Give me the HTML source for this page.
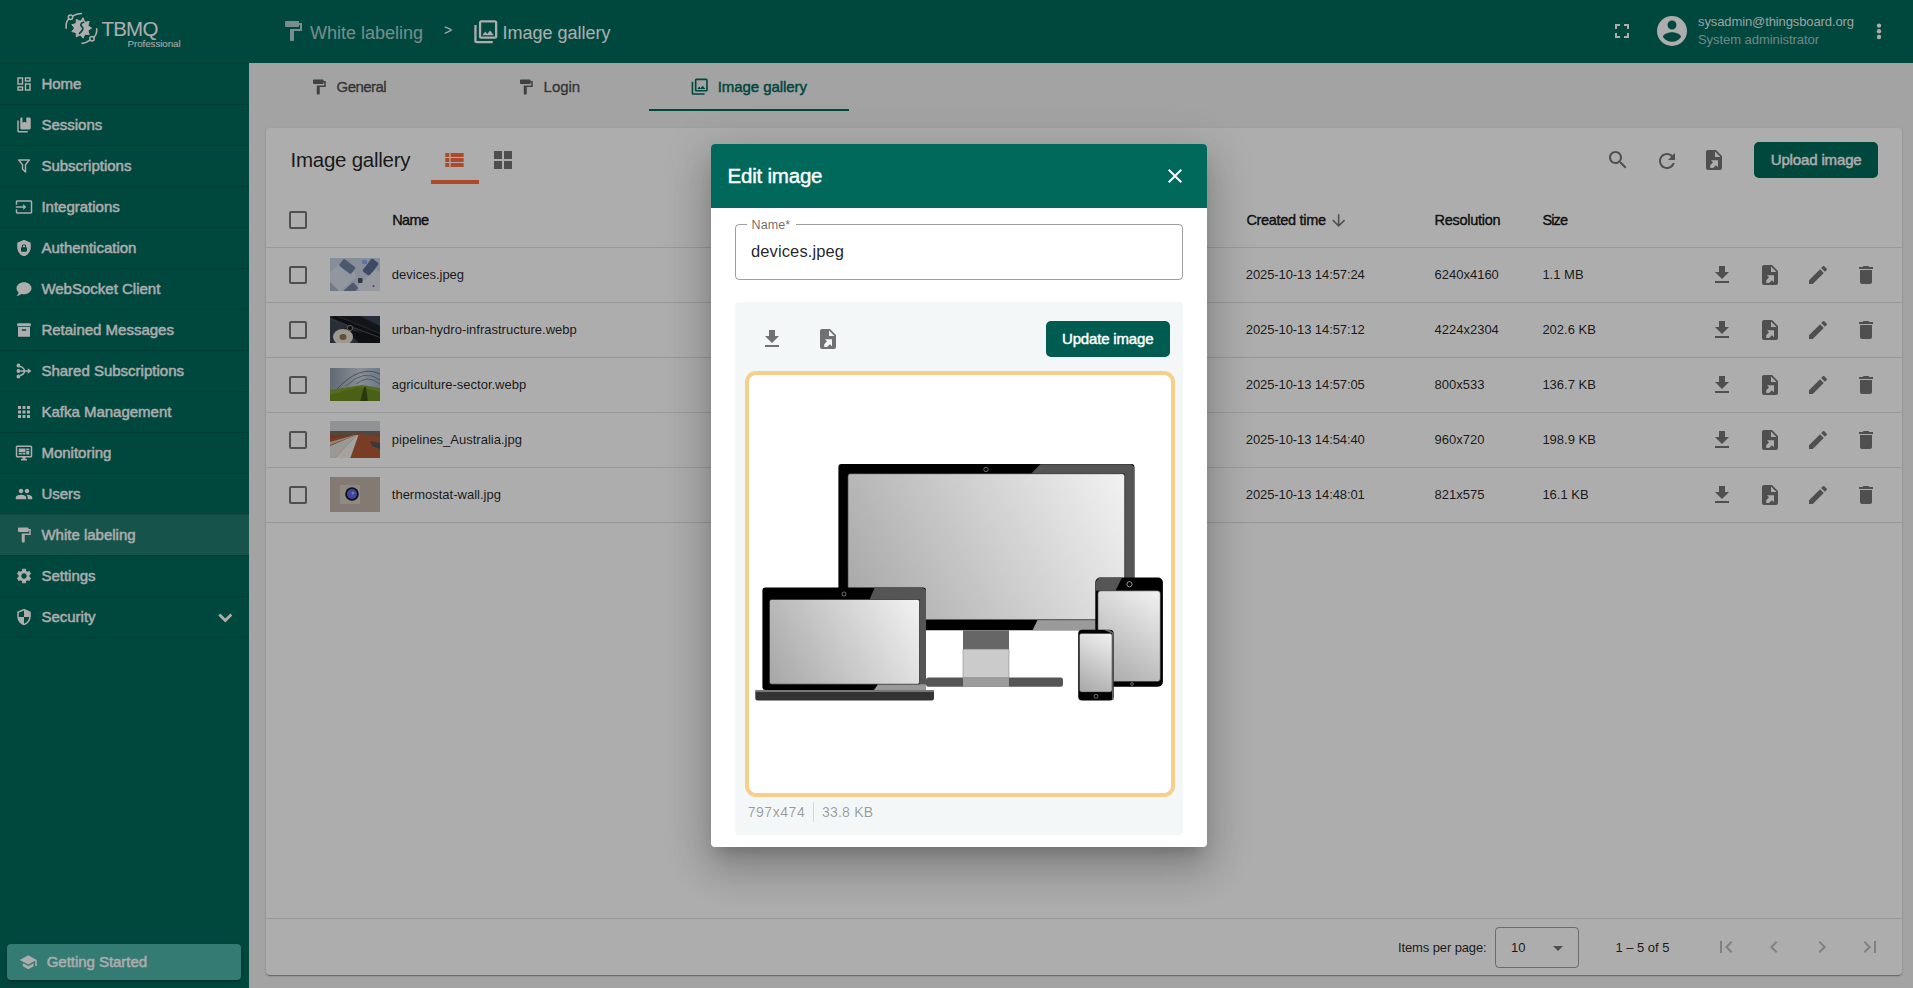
<!DOCTYPE html>
<html><head><meta charset="utf-8">
<style>
*{box-sizing:border-box;margin:0;padding:0}
html,body{width:1913px;height:988px;overflow:hidden;background:#f0f0f0;font-family:"Liberation Sans",sans-serif;}
.abs{position:absolute}
svg{display:block}
.t{position:absolute;white-space:nowrap;line-height:1}
.line{position:absolute;height:1px;background:rgba(0,0,0,0.12)}
.cb{position:absolute;width:18px;height:18px;border:2px solid rgba(0,0,0,0.54);border-radius:2px}
</style></head><body>

<div class="abs" style="left:0;top:0;width:249px;height:988px;background:#00695c"></div>
<div class="abs" style="left:249px;top:0;width:1664px;height:63px;background:#00695c"></div>
<svg class="abs" style="left:65px;top:12px;width:33px;height:33px" viewBox="0 0 33 33" fill="none" stroke="#fff" stroke-linecap="round">
<path d="M1.2 16.1 C0.8 12 2 8.5 4 6.7" stroke-width="1.6"/>
<circle cx="5.5" cy="5.2" r="2.2" stroke-width="1.5"/>
<path d="M7.6 4.2 C10 2.5 13 1.6 16.4 1.5" stroke-width="1.6"/>
<path d="M31.7 16.9 C32 21 30.5 24 28.6 25.6" stroke-width="1.6"/>
<circle cx="27" cy="26.7" r="2.2" stroke-width="1.5"/>
<path d="M25 28.1 C22.5 30 20 31 17.2 31.4" stroke-width="1.6"/>
<circle cx="16.4" cy="16.1" r="7.6" fill="#fff" stroke="none"/>
<polygon points="18.17,6.05 19.80,10.21 24.21,9.54 22.79,13.77 26.60,16.10 22.79,18.43 24.21,22.66 19.80,21.99 18.17,26.15 15.22,22.80 11.30,24.93 11.19,20.47 6.82,19.59 9.60,16.10 6.82,12.61 11.19,11.73 11.30,7.27 15.22,9.40" fill="#fff" stroke="#fff" stroke-width="1" stroke-linejoin="round"/>
<path d="M18.6 10.2 C15.5 11 15 13.5 17.2 15 C19 16.3 17 19 14.5 21.5" stroke="#00695c" stroke-width="1.7"/>
</svg>
<div class="t" style="left:101.40px;top:18.57px;font-size:20.5px;color:#fff;letter-spacing:-0.740px;">TBMQ</div>
<div class="t" style="left:127.60px;top:38.87px;font-size:9.8px;color:#fff;letter-spacing:-0.085px;">Professional</div>
<div class="line" style="left:0;top:63px;width:249px;background:rgba(0,0,0,0.14)"></div>
<svg class="abs" style="left:15px;top:75px;width:18px;height:18px;fill:#fff" viewBox="0 0 24 24"><path fill-rule="evenodd" d="M19 5v2h-4V5h4M9 5v6H5V5h4m10 8v6h-4v-6h4M9 17v2H5v-2h4M21 3h-8v6h8V3zM11 3H3v10h8V3zm10 8h-8v10h8V11zm-10 4H3v6h8v-6z"/></svg>
<div class="t" style="left:41.40px;top:76.05px;font-size:15px;color:#fff;-webkit-text-stroke:0.45px #fff;">Home</div>
<div class="line" style="left:0;top:104px;width:249px;background:rgba(0,0,0,0.14)"></div>
<svg class="abs" style="left:15px;top:116px;width:18px;height:18px;fill:#fff" viewBox="0 0 24 24"><path fill-rule="evenodd" d="M19 18H9C7.89 18 7 17.1 7 16V4C7 2.89 7.89 2 9 2H10V9L12.5 7.5L15 9V2H19C20.1 2 21 2.89 21 4V16C21 17.1 20.1 18 19 18M17 20V22H5C3.89 22 3 21.1 3 20V6H5V20H17Z"/></svg>
<div class="t" style="left:41.40px;top:117.05px;font-size:15px;color:#fff;-webkit-text-stroke:0.45px #fff;">Sessions</div>
<div class="line" style="left:0;top:145px;width:249px;background:rgba(0,0,0,0.14)"></div>
<svg class="abs" style="left:15px;top:157px;width:18px;height:18px;fill:#fff" viewBox="0 0 24 24"><path fill-rule="evenodd" d="M15,19.88C15.04,20.18 14.94,20.5 14.71,20.71C14.32,21.1 13.69,21.1 13.3,20.71L9.29,16.7C9.06,16.47 8.96,16.16 9,15.87V10.75L4.21,4.62C3.87,4.19 3.95,3.56 4.38,3.22C4.57,3.08 4.78,3 5,3V3H19V3C19.22,3 19.43,3.08 19.62,3.22C20.05,3.56 20.13,4.19 19.79,4.62L15,10.75V19.88M7.04,5L11,10.06V15.58L13,17.58V10.05L16.96,5H7.04Z"/></svg>
<div class="t" style="left:41.40px;top:158.05px;font-size:15px;color:#fff;-webkit-text-stroke:0.45px #fff;">Subscriptions</div>
<div class="line" style="left:0;top:186px;width:249px;background:rgba(0,0,0,0.14)"></div>
<svg class="abs" style="left:15px;top:198px;width:18px;height:18px;fill:#fff" viewBox="0 0 24 24"><path fill-rule="evenodd" d="M21 3.01H3c-1.1 0-2 .9-2 2V9h2V4.99h18v14.03H3V15H1v4.01c0 1.1.9 1.98 2 1.98h18c1.1 0 2-.88 2-1.98v-14c0-1.11-.9-2-2-2zM11 16l4-4-4-4v3H1v2h10v3z"/></svg>
<div class="t" style="left:41.40px;top:199.05px;font-size:15px;color:#fff;-webkit-text-stroke:0.45px #fff;">Integrations</div>
<div class="line" style="left:0;top:227px;width:249px;background:rgba(0,0,0,0.14)"></div>
<svg class="abs" style="left:15px;top:239px;width:18px;height:18px;fill:#fff" viewBox="0 0 24 24"><path fill-rule="evenodd" d="M12,1L3,5V11C3,16.55 6.84,21.74 12,23C17.16,21.74 21,16.55 21,11V5L12,1M12,7C13.4,7 14.8,8.1 14.8,9.5V11C15.4,11 16,11.6 16,12.3V15.8C16,16.4 15.4,17 14.7,17H9.2C8.6,17 8,16.4 8,15.7V12.2C8,11.6 8.6,11 9.2,11V9.5C9.2,8.1 10.6,7 12,7M12,8.2C11.2,8.2 10.5,8.7 10.5,9.5V11H13.5V9.5C13.5,8.7 12.8,8.2 12,8.2Z"/></svg>
<div class="t" style="left:41.40px;top:240.05px;font-size:15px;color:#fff;-webkit-text-stroke:0.45px #fff;">Authentication</div>
<div class="line" style="left:0;top:268px;width:249px;background:rgba(0,0,0,0.14)"></div>
<svg class="abs" style="left:15px;top:280px;width:18px;height:18px;fill:#fff" viewBox="0 0 24 24"><path fill-rule="evenodd" d="M12,3C17.5,3 22,6.58 22,11C22,15.42 17.5,19 12,19C10.76,19 9.57,18.82 8.47,18.5C5.55,21 2,21 2,21C4.33,18.67 4.7,17.1 4.75,16.5C3.05,15.07 2,13.13 2,11C2,6.58 6.5,3 12,3Z"/></svg>
<div class="t" style="left:41.40px;top:281.05px;font-size:15px;color:#fff;-webkit-text-stroke:0.45px #fff;">WebSocket Client</div>
<div class="line" style="left:0;top:309px;width:249px;background:rgba(0,0,0,0.14)"></div>
<svg class="abs" style="left:15px;top:321px;width:18px;height:18px;fill:#fff" viewBox="0 0 24 24"><path fill-rule="evenodd" d="M3,3H21V7H3V3M4,8H20V21H4V8M9.5,11A0.5,0.5 0 0,0 9,11.5V13H15V11.5A0.5,0.5 0 0,0 14.5,11H9.5Z"/></svg>
<div class="t" style="left:41.40px;top:322.05px;font-size:15px;color:#fff;-webkit-text-stroke:0.45px #fff;">Retained Messages</div>
<div class="line" style="left:0;top:350px;width:249px;background:rgba(0,0,0,0.14)"></div>
<svg class="abs" style="left:15px;top:362px;width:18px;height:18px;fill:#fff" viewBox="0 0 24 24"><path fill-rule="evenodd" d="M4.6 2.1a2.6 2.6 0 1 1 0 5.2a2.6 2.6 0 1 1 0-5.2zM4.6 9.4a2.6 2.6 0 1 1 0 5.2a2.6 2.6 0 1 1 0-5.2zM4.6 16.8a2.6 2.6 0 1 1 0 5.2a2.6 2.6 0 1 1 0-5.2zM6.8 11H17V8.2L21.9 12 17 15.8V13H6.8zM6.6 4.9C10.4 5.5 13 8.3 13.7 11h-2.1C10.9 9.1 8.9 7.4 6.3 7.1zM6.6 19.1C10.4 18.5 13 15.7 13.7 13h-2.1C10.9 14.9 8.9 16.6 6.3 16.9z"/></svg>
<div class="t" style="left:41.40px;top:363.05px;font-size:15px;color:#fff;-webkit-text-stroke:0.45px #fff;">Shared Subscriptions</div>
<div class="line" style="left:0;top:391px;width:249px;background:rgba(0,0,0,0.14)"></div>
<svg class="abs" style="left:15px;top:403px;width:18px;height:18px;fill:#fff" viewBox="0 0 24 24"><path fill-rule="evenodd" d="M4 8h4V4H4v4zm6 12h4v-4h-4v4zm-6 0h4v-4H4v4zm0-6h4v-4H4v4zm6 0h4v-4h-4v4zm6-10v4h4V4h-4zm-6 4h4V4h-4v4zm6 6h4v-4h-4v4zm0 6h4v-4h-4v4z"/></svg>
<div class="t" style="left:41.40px;top:404.05px;font-size:15px;color:#fff;-webkit-text-stroke:0.45px #fff;">Kafka Management</div>
<div class="line" style="left:0;top:432px;width:249px;background:rgba(0,0,0,0.14)"></div>
<svg class="abs" style="left:15px;top:444px;width:18px;height:18px;fill:#fff" viewBox="0 0 24 24"><path fill-rule="evenodd" d="M21,16V4H3V16H21M21,2A2,2 0 0,1 23,4V16A2,2 0 0,1 21,18H14V20H16V22H8V20H10V18H3C1.89,18 1,17.1 1,16V4C1,2.89 1.89,2 3,2H21M5,6H14V11H5V6M15,6H19V8H15V6M19,9V14H15V9H19M5,12H9V14H5V12M10,12H14V14H10V12Z"/></svg>
<div class="t" style="left:41.40px;top:445.05px;font-size:15px;color:#fff;-webkit-text-stroke:0.45px #fff;">Monitoring</div>
<div class="line" style="left:0;top:473px;width:249px;background:rgba(0,0,0,0.14)"></div>
<svg class="abs" style="left:15px;top:485px;width:18px;height:18px;fill:#fff" viewBox="0 0 24 24"><path fill-rule="evenodd" d="M16 11c1.66 0 2.99-1.34 2.99-3S17.66 5 16 5c-1.66 0-3 1.34-3 3s1.34 3 3 3zm-8 0c1.66 0 2.99-1.34 2.99-3S9.66 5 8 5C6.34 5 5 6.34 5 8s1.34 3 3 3zm0 2c-2.33 0-7 1.17-7 3.5V19h14v-2.5c0-2.33-4.67-3.5-7-3.5zm8 0c-.29 0-.62.02-.97.05 1.16.84 1.97 1.97 1.97 3.45V19h6v-2.5c0-2.33-4.67-3.5-7-3.5z"/></svg>
<div class="t" style="left:41.40px;top:486.05px;font-size:15px;color:#fff;-webkit-text-stroke:0.45px #fff;">Users</div>
<div class="abs" style="left:0;top:514px;width:249px;height:41px;background:rgba(255,255,255,0.12)"></div>
<div class="line" style="left:0;top:514px;width:249px;background:rgba(0,0,0,0.14)"></div>
<svg class="abs" style="left:15px;top:526px;width:18px;height:18px;fill:#fff" viewBox="0 0 24 24"><path fill-rule="evenodd" d="M18 4V3c0-.55-.45-1-1-1H5c-.55 0-1 .45-1 1v4c0 .55.45 1 1 1h12c.55 0 1-.45 1-1V6h1v4H9v11c0 .55.45 1 1 1h2c.55 0 1-.45 1-1v-9h8V4h-3z"/></svg>
<div class="t" style="left:41.40px;top:527.05px;font-size:15px;color:#fff;-webkit-text-stroke:0.45px #fff;">White labeling</div>
<div class="line" style="left:0;top:555px;width:249px;background:rgba(0,0,0,0.14)"></div>
<svg class="abs" style="left:15px;top:567px;width:18px;height:18px;fill:#fff" viewBox="0 0 24 24"><path fill-rule="evenodd" d="M19.14,12.94c0.04-0.3,0.06-0.61,0.06-0.94c0-0.32-0.02-0.64-0.07-0.94l2.03-1.58c0.18-0.14,0.23-0.41,0.12-0.61l-1.92-3.32c-0.12-0.22-0.37-0.29-0.59-0.22l-2.39,0.96c-0.5-0.38-1.03-0.7-1.62-0.94L14.4,2.81c-0.04-0.24-0.24-0.41-0.48-0.41h-3.84c-0.24,0-0.43,0.17-0.47,0.41L9.25,5.35C8.66,5.59,8.12,5.92,7.63,6.29L5.24,5.33c-0.22-0.08-0.47,0-0.59,0.22L2.74,8.87C2.62,9.08,2.66,9.34,2.86,9.48l2.03,1.58C4.84,11.36,4.8,11.69,4.8,12s0.02,0.64,0.07,0.94l-2.03,1.58c-0.18,0.14-0.23,0.41-0.12,0.61l1.92,3.32c0.12,0.22,0.37,0.29,0.59,0.22l2.39-0.96c0.5,0.38,1.03,0.7,1.62,0.94l0.36,2.54c0.05,0.24,0.24,0.41,0.48,0.41h3.84c0.24,0,0.44-0.17,0.47-0.41l0.36-2.54c0.59-0.24,1.13-0.56,1.62-0.94l2.39,0.96c0.22,0.08,0.47,0,0.59-0.22l1.92-3.32c0.12-0.22,0.07-0.47-0.12-0.61L19.14,12.94z M12,15.6c-1.98,0-3.6-1.62-3.6-3.6s1.62-3.6,3.6-3.6s3.6,1.62,3.6,3.6S13.98,15.6,12,15.6z"/></svg>
<div class="t" style="left:41.40px;top:568.05px;font-size:15px;color:#fff;-webkit-text-stroke:0.45px #fff;">Settings</div>
<div class="line" style="left:0;top:596px;width:249px;background:rgba(0,0,0,0.14)"></div>
<svg class="abs" style="left:15px;top:608px;width:18px;height:18px;fill:#fff" viewBox="0 0 24 24"><path fill-rule="evenodd" d="M12,12H19C18.47,16.11 15.72,19.78 12,20.92V12H5V6.3L12,3.19M12,1L3,5V11C3,16.55 6.84,21.73 12,23C17.16,21.73 21,16.55 21,11V5L12,1Z"/></svg>
<div class="t" style="left:41.40px;top:609.05px;font-size:15px;color:#fff;-webkit-text-stroke:0.45px #fff;">Security</div>
<div class="line" style="left:0;top:637px;width:249px;background:rgba(0,0,0,0.14)"></div>
<svg class="abs" style="left:210px;top:602px;width:30px;height:30px" viewBox="210 602 30 30"><polyline points="219.3,614.6 225.3,620.6 231.3,614.6" fill="none" stroke="#fff" stroke-width="2.8"/></svg>
<div class="abs" style="left:7px;top:944px;width:234px;height:36px;background:#4db6ac;border-radius:4px;box-shadow:0 3px 1px -2px rgba(0,0,0,.2),0 2px 2px 0 rgba(0,0,0,.14),0 1px 5px 0 rgba(0,0,0,.12)"></div>
<svg class="abs" style="left:19px;top:952.7px;width:18.5px;height:18.5px;fill:#fff" viewBox="0 0 24 24"><path fill-rule="evenodd" d="M5 13.18v4L12 21l7-3.82v-4L12 17l-7-3.82zM12 3L1 9l11 6 9-4.91V17h2V9L12 3z"/></svg>
<div class="t" style="left:46.70px;top:954.25px;font-size:15px;color:#fff;letter-spacing:-0.035px;-webkit-text-stroke:0.45px #fff;">Getting Started</div>
<svg class="abs" style="left:281px;top:19px;width:24px;height:24px;fill:rgba(255,255,255,0.7)" viewBox="0 0 24 24"><path fill-rule="evenodd" d="M18 4V3c0-.55-.45-1-1-1H5c-.55 0-1 .45-1 1v4c0 .55.45 1 1 1h12c.55 0 1-.45 1-1V6h1v4H9v11c0 .55.45 1 1 1h2c.55 0 1-.45 1-1v-9h8V4h-3z"/></svg>
<div class="t" style="left:310.00px;top:23.90px;font-size:18px;color:rgba(255,255,255,0.7);letter-spacing:-0.005px;">White labeling</div>
<div class="t" style="left:444.00px;top:23.10px;font-size:14px;color:#fff;">&gt;</div>
<svg class="abs" style="left:471.5px;top:17.5px;width:27.6px;height:27.6px;fill:#fff" viewBox="0 0 24 24"><path fill-rule="evenodd" d="M20 4v12H8V4h12m0-2H8c-1.1 0-2 .9-2 2v12c0 1.1.9 2 2 2h12c1.1 0 2-.9 2-2V4c0-1.1-.9-2-2-2zm-8.5 9.67l1.69 2.26 2.48-3.1L19 15H9zM2 6v14c0 1.1.9 2 2 2h14v-2H4V6H2z"/></svg>
<div class="t" style="left:502.40px;top:23.90px;font-size:18px;color:#fff;letter-spacing:-0.005px;">Image gallery</div>
<svg class="abs" style="left:1610px;top:19px;width:24px;height:24px;fill:#fff" viewBox="0 0 24 24"><path fill-rule="evenodd" d="M7 14H5v5h5v-2H7v-3zm-2-4h2V7h3V5H5v5zm12 7h-3v2h5v-5h-2v3zM14 5v2h3v3h2V5h-5z"/></svg>
<svg class="abs" style="left:1654px;top:13px;width:36px;height:36px;fill:#fff" viewBox="0 0 24 24"><path fill-rule="evenodd" d="M12,19.2C9.5,19.2 7.29,17.92 6,16C6.03,14 10,12.9 12,12.9C14,12.9 17.97,14 18,16C16.71,17.92 14.5,19.2 12,19.2M12,5A3,3 0 0,1 15,8A3,3 0 0,1 12,11A3,3 0 0,1 9,8A3,3 0 0,1 12,5M12,2A10,10 0 0,0 2,12A10,10 0 0,0 12,22A10,10 0 0,0 22,12A10,10 0 0,0 12,2Z"/></svg>
<div class="t" style="left:1698.00px;top:14.95px;font-size:13px;color:rgba(255,255,255,0.9);letter-spacing:-0.106px;">sysadmin@thingsboard.org</div>
<div class="t" style="left:1698.00px;top:33.35px;font-size:13px;color:rgba(255,255,255,0.65);letter-spacing:-0.058px;">System administrator</div>
<svg class="abs" style="left:1870px;top:18px;width:18px;height:26px" viewBox="0 0 18 26" fill="#fff"><circle cx="9" cy="7.6" r="2.2"/><circle cx="9" cy="13.3" r="2.2"/><circle cx="9" cy="19" r="2.2"/></svg>
<svg class="abs" style="left:310.2px;top:77.5px;width:18px;height:18px;fill:rgba(0,0,0,0.6)" viewBox="0 0 24 24"><path fill-rule="evenodd" d="M18 4V3c0-.55-.45-1-1-1H5c-.55 0-1 .45-1 1v4c0 .55.45 1 1 1h12c.55 0 1-.45 1-1V6h1v4H9v11c0 .55.45 1 1 1h2c.55 0 1-.45 1-1v-9h8V4h-3z"/></svg>
<div class="t" style="left:336.60px;top:79.15px;font-size:15px;color:rgba(0,0,0,0.6);letter-spacing:-0.544px;-webkit-text-stroke:0.45px rgba(0,0,0,0.6);">General</div>
<svg class="abs" style="left:517.1px;top:77.5px;width:18px;height:18px;fill:rgba(0,0,0,0.6)" viewBox="0 0 24 24"><path fill-rule="evenodd" d="M18 4V3c0-.55-.45-1-1-1H5c-.55 0-1 .45-1 1v4c0 .55.45 1 1 1h12c.55 0 1-.45 1-1V6h1v4H9v11c0 .55.45 1 1 1h2c.55 0 1-.45 1-1v-9h8V4h-3z"/></svg>
<div class="t" style="left:543.60px;top:79.15px;font-size:15px;color:rgba(0,0,0,0.6);letter-spacing:-0.026px;-webkit-text-stroke:0.45px rgba(0,0,0,0.6);">Login</div>
<svg class="abs" style="left:690.4px;top:77.4px;width:19.4px;height:19.4px;fill:#00695c" viewBox="0 0 24 24"><path fill-rule="evenodd" d="M20 4v12H8V4h12m0-2H8c-1.1 0-2 .9-2 2v12c0 1.1.9 2 2 2h12c1.1 0 2-.9 2-2V4c0-1.1-.9-2-2-2zm-8.5 9.67l1.69 2.26 2.48-3.1L19 15H9zM2 6v14c0 1.1.9 2 2 2h14v-2H4V6H2z"/></svg>
<div class="t" style="left:717.70px;top:79.05px;font-size:15px;color:#00695c;letter-spacing:-0.062px;-webkit-text-stroke:0.45px #00695c;">Image gallery</div>
<div class="abs" style="left:649px;top:108.5px;width:200px;height:2.5px;background:#00695c"></div>
<div class="abs" style="left:266px;top:128px;width:1636px;height:847px;background:#fff;border-radius:4px;box-shadow:0 2px 1px -1px rgba(0,0,0,.2),0 1px 1px 0 rgba(0,0,0,.14),0 1px 3px 0 rgba(0,0,0,.12)"></div>
<div class="t" style="left:290.50px;top:150.07px;font-size:20.5px;color:rgba(0,0,0,0.87);letter-spacing:-0.255px;">Image gallery</div>
<svg class="abs" style="left:442.3px;top:147.9px;width:24px;height:24px;fill:#ff6e40" viewBox="0 0 24 24"><path fill-rule="evenodd" d="M3.3 5h4v4h-4zM8.6 5h13v4h-13zM3.3 10h4v4h-4zM8.6 10h13v4h-13zM3.3 15h4v4h-4zM8.6 15h13v4h-13z"/></svg>
<div class="abs" style="left:431px;top:180px;width:48px;height:4px;background:#ff6e40"></div>
<svg class="abs" style="left:490.7px;top:147.7px;width:24px;height:24px;fill:rgba(0,0,0,0.54)" viewBox="0 0 24 24"><path fill-rule="evenodd" d="M3 3h8v8H3zm10 0h8v8h-8zM3 13h8v8H3zm10 0h8v8h-8z"/></svg>
<svg class="abs" style="left:1606px;top:148px;width:24px;height:24px;fill:rgba(0,0,0,0.54)" viewBox="0 0 24 24"><path fill-rule="evenodd" d="M15.5 14h-.79l-.28-.27C15.41 12.59 16 11.11 16 9.5 16 5.91 13.09 3 9.5 3S3 5.91 3 9.5 5.91 16 9.5 16c1.61 0 3.09-.59 4.23-1.57l.27.28v.79l5 4.99L20.49 19l-4.99-5zm-6 0C7.01 14 5 11.99 5 9.5S7.01 5 9.5 5 14 7.01 14 9.5 11.99 14 9.5 14z"/></svg>
<svg class="abs" style="left:1654.5px;top:148.5px;width:24px;height:24px;fill:rgba(0,0,0,0.54)" viewBox="0 0 24 24"><path fill-rule="evenodd" d="M17.65 6.35C16.2 4.9 14.21 4 12 4c-4.42 0-7.99 3.58-7.99 8s3.57 8 7.99 8c3.73 0 6.84-2.55 7.73-6h-2.08c-.82 2.33-3.04 4-5.650 4-3.31 0-6-2.69-6-6s2.69-6 6-6c1.66 0 3.14.69 4.22 1.78L13 11h7V4l-2.35 2.35z"/></svg>
<svg class="abs" style="left:1702px;top:148px;width:24px;height:24px;fill:rgba(0,0,0,0.54)" viewBox="0 0 24 24"><path fill-rule="evenodd" d="M13,9V3.5L18.5,9M6,2C4.89,2 4,2.89 4,4V20A2,2 0 0,0 6,22H18A2,2 0 0,0 20,20V8L14,2H6Z M8.93,12.22H16V19.29L13.88,17.17L11.05,20H8.22V17.17L11.05,14.35Z"/></svg>
<div class="abs" style="left:1754px;top:142px;width:124px;height:36px;background:#00695c;border-radius:5px"></div>
<div class="t" style="left:1770.70px;top:152.05px;font-size:15px;color:#fff;letter-spacing:-0.142px;-webkit-text-stroke:0.45px #fff;">Upload image</div>
<div class="cb" style="left:289px;top:211px"></div>
<div class="t" style="left:392.20px;top:212.98px;font-size:14.5px;color:rgba(0,0,0,0.87);letter-spacing:-0.560px;-webkit-text-stroke:0.45px rgba(0,0,0,0.87);">Name</div>
<div class="t" style="left:1246.40px;top:212.98px;font-size:14.5px;color:rgba(0,0,0,0.87);letter-spacing:-0.301px;-webkit-text-stroke:0.45px rgba(0,0,0,0.87);">Created time</div>
<svg class="abs" style="left:1329.3px;top:210.8px;width:19.3px;height:19.3px;fill:rgba(0,0,0,0.54)" viewBox="0 0 24 24"><path fill-rule="evenodd" d="M20 12l-1.41-1.41L13 16.17V4h-2v12.17l-5.58-5.59L4 12l8 8 8-8z"/></svg>
<div class="t" style="left:1434.50px;top:212.98px;font-size:14.5px;color:rgba(0,0,0,0.87);letter-spacing:-0.280px;-webkit-text-stroke:0.45px rgba(0,0,0,0.87);">Resolution</div>
<div class="t" style="left:1542.40px;top:212.98px;font-size:14.5px;color:rgba(0,0,0,0.87);letter-spacing:-0.836px;-webkit-text-stroke:0.45px rgba(0,0,0,0.87);">Size</div>
<div class="line" style="left:266px;top:247px;width:1636px"></div>
<div class="cb" style="left:289px;top:266px"></div>
<div class="abs" style="left:330px;top:258.0px;width:50px;height:33px;overflow:hidden"><svg width="50" height="34" viewBox="0 0 50 34"><rect width="50" height="34" fill="#c9d1e2"/>
<g transform="rotate(-42 10 20)"><rect x="-6" y="9" width="30" height="21" rx="2" fill="#d8dde8"/></g>
<polygon points="0,33 10,34 0,24" fill="#aab3c6"/>
<g transform="rotate(38 17 8)"><rect x="10" y="4" width="15" height="8.5" rx="1.5" fill="#6e82a6"/></g>
<g transform="rotate(-52 40 10)"><rect x="33" y="5.5" width="16" height="9" rx="1.5" fill="#5a6d93"/></g>
<g transform="rotate(-42 42 27)"><rect x="29" y="18" width="27" height="20" rx="2" fill="#dfe3ec"/></g>
<g transform="rotate(-42 20 31)"><rect x="14" y="28" width="13" height="8" rx="1.5" fill="#7384a3"/></g>
<rect x="28" y="20" width="4.5" height="5" rx="1" fill="#4a4f5a"/>
<rect x="32" y="2" width="5" height="4" rx="1" fill="#86aaf0"/>
<circle cx="43.5" cy="28" r="1" fill="#667"/></svg></div>
<div class="t" style="left:391.80px;top:268.05px;font-size:13px;color:rgba(0,0,0,0.87);">devices.jpeg</div>
<div class="t" style="left:1245.80px;top:268.05px;font-size:13px;color:rgba(0,0,0,0.87);letter-spacing:-0.095px;">2025-10-13 14:57:24</div>
<div class="t" style="left:1434.50px;top:268.05px;font-size:13px;color:rgba(0,0,0,0.87);">6240x4160</div>
<div class="t" style="left:1542.40px;top:268.05px;font-size:13px;color:rgba(0,0,0,0.87);">1.1 MB</div>
<svg class="abs" style="left:1710px;top:262.5px;width:24px;height:24px;fill:rgba(0,0,0,0.54)" viewBox="0 0 24 24"><path fill-rule="evenodd" d="M19 9h-4V3H9v6H5l7 7 7-7zM5 18v2h14v-2H5z"/></svg>
<svg class="abs" style="left:1758px;top:262.5px;width:24px;height:24px;fill:rgba(0,0,0,0.54)" viewBox="0 0 24 24"><path fill-rule="evenodd" d="M13,9V3.5L18.5,9M6,2C4.89,2 4,2.89 4,4V20A2,2 0 0,0 6,22H18A2,2 0 0,0 20,20V8L14,2H6Z M8.93,12.22H16V19.29L13.88,17.17L11.05,20H8.22V17.17L11.05,14.35Z"/></svg>
<svg class="abs" style="left:1806px;top:262.5px;width:24px;height:24px;fill:rgba(0,0,0,0.54)" viewBox="0 0 24 24"><path fill-rule="evenodd" d="M3 17.25V21h3.75L17.81 9.94l-3.75-3.75L3 17.25zM20.71 7.04c.39-.39.39-1.02 0-1.41l-2.34-2.34c-.39-.39-1.02-.39-1.41 0l-1.83 1.83 3.75 3.75 1.83-1.83z"/></svg>
<svg class="abs" style="left:1854px;top:262.5px;width:24px;height:24px;fill:rgba(0,0,0,0.54)" viewBox="0 0 24 24"><path fill-rule="evenodd" d="M6 19c0 1.1.9 2 2 2h8c1.1 0 2-.9 2-2V7H6v12zM19 4h-3.5l-1-1h-5l-1 1H5v2h14V4z"/></svg>
<div class="line" style="left:266px;top:302px;width:1636px"></div>
<div class="cb" style="left:289px;top:321px"></div>
<div class="abs" style="left:330px;top:316.0px;width:50px;height:27px;overflow:hidden"><svg width="50" height="28" viewBox="0 0 50 28"><rect width="50" height="28" fill="#3a4452"/>
<polygon points="0,1 6,0 50,18 50,26" fill="#151719"/>
<polygon points="8,0 30,0 50,10 50,17" fill="#1d2024"/>
<polygon points="14,12 50,22 50,28 30,28" fill="#17191c"/>
<polygon points="0,2 50,21 50,22 0,4" fill="#4a4e55"/>
<ellipse cx="13" cy="21" rx="10" ry="8" fill="#e8e2d6"/><ellipse cx="13" cy="21" rx="3.5" ry="3" fill="#8c7650"/>
<circle cx="20" cy="12" r="2.6" fill="#111" stroke="#bbb" stroke-width="0.7"/></svg></div>
<div class="t" style="left:391.80px;top:323.05px;font-size:13px;color:rgba(0,0,0,0.87);">urban-hydro-infrastructure.webp</div>
<div class="t" style="left:1245.80px;top:323.05px;font-size:13px;color:rgba(0,0,0,0.87);letter-spacing:-0.095px;">2025-10-13 14:57:12</div>
<div class="t" style="left:1434.50px;top:323.05px;font-size:13px;color:rgba(0,0,0,0.87);">4224x2304</div>
<div class="t" style="left:1542.40px;top:323.05px;font-size:13px;color:rgba(0,0,0,0.87);">202.6 KB</div>
<svg class="abs" style="left:1710px;top:317.5px;width:24px;height:24px;fill:rgba(0,0,0,0.54)" viewBox="0 0 24 24"><path fill-rule="evenodd" d="M19 9h-4V3H9v6H5l7 7 7-7zM5 18v2h14v-2H5z"/></svg>
<svg class="abs" style="left:1758px;top:317.5px;width:24px;height:24px;fill:rgba(0,0,0,0.54)" viewBox="0 0 24 24"><path fill-rule="evenodd" d="M13,9V3.5L18.5,9M6,2C4.89,2 4,2.89 4,4V20A2,2 0 0,0 6,22H18A2,2 0 0,0 20,20V8L14,2H6Z M8.93,12.22H16V19.29L13.88,17.17L11.05,20H8.22V17.17L11.05,14.35Z"/></svg>
<svg class="abs" style="left:1806px;top:317.5px;width:24px;height:24px;fill:rgba(0,0,0,0.54)" viewBox="0 0 24 24"><path fill-rule="evenodd" d="M3 17.25V21h3.75L17.81 9.94l-3.75-3.75L3 17.25zM20.71 7.04c.39-.39.39-1.02 0-1.41l-2.34-2.34c-.39-.39-1.02-.39-1.41 0l-1.83 1.83 3.75 3.75 1.83-1.83z"/></svg>
<svg class="abs" style="left:1854px;top:317.5px;width:24px;height:24px;fill:rgba(0,0,0,0.54)" viewBox="0 0 24 24"><path fill-rule="evenodd" d="M6 19c0 1.1.9 2 2 2h8c1.1 0 2-.9 2-2V7H6v12zM19 4h-3.5l-1-1h-5l-1 1H5v2h14V4z"/></svg>
<div class="line" style="left:266px;top:357px;width:1636px"></div>
<div class="cb" style="left:289px;top:376px"></div>
<div class="abs" style="left:330px;top:368.0px;width:50px;height:33px;overflow:hidden"><svg width="50" height="34" viewBox="0 0 50 34"><defs><linearGradient id="ag" x1="0" y1="0" x2="1" y2="0"><stop offset="0" stop-color="#8d9cab"/><stop offset=".6" stop-color="#c9d3dc"/><stop offset="1" stop-color="#9fb3c8"/></linearGradient></defs>
<rect width="50" height="34" fill="url(#ag)"/>
<path d="M6 22 Q30 -4 50 6" fill="none" stroke="#3b4550" stroke-width="0.6"/><path d="M16 18 Q34 0 50 12" fill="none" stroke="#3b4550" stroke-width="0.5"/><path d="M26 16 Q38 6 50 16" fill="none" stroke="#3b4550" stroke-width="0.5"/>
<polygon points="0,22 32,17 50,20 50,34 0,34" fill="#7ea02c"/>
<polygon points="0,27 28,19 50,24 50,34 0,34" fill="#6a8f1e"/>
<polygon points="30,34 34,19 36,19 38,34" fill="#3c5614"/></svg></div>
<div class="t" style="left:391.80px;top:378.05px;font-size:13px;color:rgba(0,0,0,0.87);">agriculture-sector.webp</div>
<div class="t" style="left:1245.80px;top:378.05px;font-size:13px;color:rgba(0,0,0,0.87);letter-spacing:-0.095px;">2025-10-13 14:57:05</div>
<div class="t" style="left:1434.50px;top:378.05px;font-size:13px;color:rgba(0,0,0,0.87);">800x533</div>
<div class="t" style="left:1542.40px;top:378.05px;font-size:13px;color:rgba(0,0,0,0.87);">136.7 KB</div>
<svg class="abs" style="left:1710px;top:372.5px;width:24px;height:24px;fill:rgba(0,0,0,0.54)" viewBox="0 0 24 24"><path fill-rule="evenodd" d="M19 9h-4V3H9v6H5l7 7 7-7zM5 18v2h14v-2H5z"/></svg>
<svg class="abs" style="left:1758px;top:372.5px;width:24px;height:24px;fill:rgba(0,0,0,0.54)" viewBox="0 0 24 24"><path fill-rule="evenodd" d="M13,9V3.5L18.5,9M6,2C4.89,2 4,2.89 4,4V20A2,2 0 0,0 6,22H18A2,2 0 0,0 20,20V8L14,2H6Z M8.93,12.22H16V19.29L13.88,17.17L11.05,20H8.22V17.17L11.05,14.35Z"/></svg>
<svg class="abs" style="left:1806px;top:372.5px;width:24px;height:24px;fill:rgba(0,0,0,0.54)" viewBox="0 0 24 24"><path fill-rule="evenodd" d="M3 17.25V21h3.75L17.81 9.94l-3.75-3.75L3 17.25zM20.71 7.04c.39-.39.39-1.02 0-1.41l-2.34-2.34c-.39-.39-1.02-.39-1.41 0l-1.83 1.83 3.75 3.75 1.83-1.83z"/></svg>
<svg class="abs" style="left:1854px;top:372.5px;width:24px;height:24px;fill:rgba(0,0,0,0.54)" viewBox="0 0 24 24"><path fill-rule="evenodd" d="M6 19c0 1.1.9 2 2 2h8c1.1 0 2-.9 2-2V7H6v12zM19 4h-3.5l-1-1h-5l-1 1H5v2h14V4z"/></svg>
<div class="line" style="left:266px;top:412px;width:1636px"></div>
<div class="cb" style="left:289px;top:431px"></div>
<div class="abs" style="left:330px;top:421.0px;width:50px;height:37px;overflow:hidden"><svg width="50" height="38" viewBox="0 0 50 38"><rect width="50" height="38" fill="#b0403a"/>
<rect width="50" height="10" fill="#d6d8dc"/>
<polygon points="0,10 50,10 50,14 0,14" fill="#7a6a5c"/>
<polygon points="0,14 50,14 50,38 0,38" fill="#a5502e"/>
<polygon points="0,18 27,13 50,15 50,38 0,38" fill="#b25a36"/>
<polygon points="0,25 26,14 27,14 4,38 0,38" fill="#e4e2de"/>
<polygon points="4,38 27,14 28.5,14 20,38" fill="#f2f0ec"/>
<polygon points="0,21 25,14 26,14 0,24" fill="#cfcac4"/>
<polygon points="40,20 50,22 50,28 42,25" fill="#555"/></svg></div>
<div class="t" style="left:391.80px;top:433.05px;font-size:13px;color:rgba(0,0,0,0.87);">pipelines_Australia.jpg</div>
<div class="t" style="left:1245.80px;top:433.05px;font-size:13px;color:rgba(0,0,0,0.87);letter-spacing:-0.095px;">2025-10-13 14:54:40</div>
<div class="t" style="left:1434.50px;top:433.05px;font-size:13px;color:rgba(0,0,0,0.87);">960x720</div>
<div class="t" style="left:1542.40px;top:433.05px;font-size:13px;color:rgba(0,0,0,0.87);">198.9 KB</div>
<svg class="abs" style="left:1710px;top:427.5px;width:24px;height:24px;fill:rgba(0,0,0,0.54)" viewBox="0 0 24 24"><path fill-rule="evenodd" d="M19 9h-4V3H9v6H5l7 7 7-7zM5 18v2h14v-2H5z"/></svg>
<svg class="abs" style="left:1758px;top:427.5px;width:24px;height:24px;fill:rgba(0,0,0,0.54)" viewBox="0 0 24 24"><path fill-rule="evenodd" d="M13,9V3.5L18.5,9M6,2C4.89,2 4,2.89 4,4V20A2,2 0 0,0 6,22H18A2,2 0 0,0 20,20V8L14,2H6Z M8.93,12.22H16V19.29L13.88,17.17L11.05,20H8.22V17.17L11.05,14.35Z"/></svg>
<svg class="abs" style="left:1806px;top:427.5px;width:24px;height:24px;fill:rgba(0,0,0,0.54)" viewBox="0 0 24 24"><path fill-rule="evenodd" d="M3 17.25V21h3.75L17.81 9.94l-3.75-3.75L3 17.25zM20.71 7.04c.39-.39.39-1.02 0-1.41l-2.34-2.34c-.39-.39-1.02-.39-1.41 0l-1.83 1.83 3.75 3.75 1.83-1.83z"/></svg>
<svg class="abs" style="left:1854px;top:427.5px;width:24px;height:24px;fill:rgba(0,0,0,0.54)" viewBox="0 0 24 24"><path fill-rule="evenodd" d="M6 19c0 1.1.9 2 2 2h8c1.1 0 2-.9 2-2V7H6v12zM19 4h-3.5l-1-1h-5l-1 1H5v2h14V4z"/></svg>
<div class="line" style="left:266px;top:467px;width:1636px"></div>
<div class="cb" style="left:289px;top:486px"></div>
<div class="abs" style="left:330px;top:477.0px;width:50px;height:35px;overflow:hidden"><svg width="50" height="35" viewBox="0 0 50 35"><rect width="50" height="35" fill="#c2b5aa"/><rect x="10" y="8" width="20" height="19" fill="#d5ccc4"/>
<circle cx="22" cy="17" r="6.8" fill="#1a1a1a"/><circle cx="22" cy="17" r="5" fill="#5a66e8"/><circle cx="23" cy="16" r="1.5" fill="#a9b0ff"/></svg></div>
<div class="t" style="left:391.80px;top:488.05px;font-size:13px;color:rgba(0,0,0,0.87);">thermostat-wall.jpg</div>
<div class="t" style="left:1245.80px;top:488.05px;font-size:13px;color:rgba(0,0,0,0.87);letter-spacing:-0.095px;">2025-10-13 14:48:01</div>
<div class="t" style="left:1434.50px;top:488.05px;font-size:13px;color:rgba(0,0,0,0.87);">821x575</div>
<div class="t" style="left:1542.40px;top:488.05px;font-size:13px;color:rgba(0,0,0,0.87);">16.1 KB</div>
<svg class="abs" style="left:1710px;top:482.5px;width:24px;height:24px;fill:rgba(0,0,0,0.54)" viewBox="0 0 24 24"><path fill-rule="evenodd" d="M19 9h-4V3H9v6H5l7 7 7-7zM5 18v2h14v-2H5z"/></svg>
<svg class="abs" style="left:1758px;top:482.5px;width:24px;height:24px;fill:rgba(0,0,0,0.54)" viewBox="0 0 24 24"><path fill-rule="evenodd" d="M13,9V3.5L18.5,9M6,2C4.89,2 4,2.89 4,4V20A2,2 0 0,0 6,22H18A2,2 0 0,0 20,20V8L14,2H6Z M8.93,12.22H16V19.29L13.88,17.17L11.05,20H8.22V17.17L11.05,14.35Z"/></svg>
<svg class="abs" style="left:1806px;top:482.5px;width:24px;height:24px;fill:rgba(0,0,0,0.54)" viewBox="0 0 24 24"><path fill-rule="evenodd" d="M3 17.25V21h3.75L17.81 9.94l-3.75-3.75L3 17.25zM20.71 7.04c.39-.39.39-1.02 0-1.41l-2.34-2.34c-.39-.39-1.02-.39-1.41 0l-1.83 1.83 3.75 3.75 1.83-1.83z"/></svg>
<svg class="abs" style="left:1854px;top:482.5px;width:24px;height:24px;fill:rgba(0,0,0,0.54)" viewBox="0 0 24 24"><path fill-rule="evenodd" d="M6 19c0 1.1.9 2 2 2h8c1.1 0 2-.9 2-2V7H6v12zM19 4h-3.5l-1-1h-5l-1 1H5v2h14V4z"/></svg>
<div class="line" style="left:266px;top:522px;width:1636px"></div>
<div class="line" style="left:266px;top:918px;width:1636px"></div>
<div class="t" style="left:1398.00px;top:941.35px;font-size:13px;color:rgba(0,0,0,0.87);letter-spacing:-0.116px;">Items per page:</div>
<div class="abs" style="left:1495px;top:927px;width:84px;height:41px;border:1px solid rgba(0,0,0,0.38);border-radius:4px"></div>
<div class="t" style="left:1511.00px;top:941.35px;font-size:13px;color:rgba(0,0,0,0.87);">10</div>
<svg class="abs" style="left:1546px;top:936px;width:24px;height:24px;fill:rgba(0,0,0,0.54)" viewBox="0 0 24 24"><path fill-rule="evenodd" d="M7 10l5 5 5-5z"/></svg>
<div class="t" style="left:1615.40px;top:941.35px;font-size:13px;color:rgba(0,0,0,0.87);letter-spacing:-0.023px;">1 – 5 of 5</div>
<svg class="abs" style="left:1714px;top:935px;width:24px;height:24px;fill:rgba(0,0,0,0.26)" viewBox="0 0 24 24"><path fill-rule="evenodd" d="M18.41 16.59L13.82 12l4.59-4.59L17 6l-6 6 6 6zM6 6h2v12H6z"/></svg>
<svg class="abs" style="left:1762px;top:935px;width:24px;height:24px;fill:rgba(0,0,0,0.26)" viewBox="0 0 24 24"><path fill-rule="evenodd" d="M15.41 16.59L10.83 12l4.58-4.59L14 6l-6 6 6 6 1.41-1.41z"/></svg>
<svg class="abs" style="left:1810px;top:935px;width:24px;height:24px;fill:rgba(0,0,0,0.26)" viewBox="0 0 24 24"><path fill-rule="evenodd" d="M8.59 16.59L13.17 12 8.59 7.41 10 6l6 6-6 6-1.41-1.41z"/></svg>
<svg class="abs" style="left:1858px;top:935px;width:24px;height:24px;fill:rgba(0,0,0,0.26)" viewBox="0 0 24 24"><path fill-rule="evenodd" d="M5.59 7.41L10.18 12l-4.59 4.59L7 18l6-6-6-6zM16 6h2v12h-2z"/></svg>
<div class="abs" style="left:0;top:0;width:1913px;height:988px;background:rgba(0,0,0,0.32)"></div>
<div class="abs" style="left:711px;top:144px;width:496px;height:703px;background:#fff;border-radius:4px;box-shadow:0 11px 15px -7px rgba(0,0,0,.2),0 24px 38px 3px rgba(0,0,0,.14),0 9px 46px 8px rgba(0,0,0,.12);overflow:hidden">
<div class="abs" style="left:0;top:0;width:496px;height:64px;background:#00695c"></div>
</div>
<div class="t" style="left:727.50px;top:166.27px;font-size:20.5px;color:#fff;letter-spacing:-0.206px;-webkit-text-stroke:0.4px #fff;">Edit image</div>
<svg class="abs" style="left:1163px;top:164px;width:24px;height:24px;fill:#fff" viewBox="0 0 24 24"><path fill-rule="evenodd" d="M19 6.41L17.59 5 12 10.59 6.41 5 5 6.41 10.59 12 5 17.59 6.41 19 12 13.41 17.59 19 19 17.59 13.41 12z"/></svg>
<div class="abs" style="left:735px;top:224px;width:448px;height:56px;border:1px solid rgba(0,0,0,0.38);border-radius:4px"></div>
<div class="abs" style="left:746.5px;top:220px;width:49px;height:8px;background:#fff"></div>
<div class="t" style="left:751.50px;top:219.18px;font-size:12.5px;color:rgba(0,0,0,0.6);letter-spacing:0.098px;">Name*</div>
<div class="t" style="left:751.00px;top:243.47px;font-size:16.5px;color:rgba(0,0,0,0.87);letter-spacing:0.116px;">devices.jpeg</div>
<div class="abs" style="left:735px;top:302px;width:448px;height:533px;background:#f4f7f8;border-radius:4px"></div>
<svg class="abs" style="left:760px;top:327px;width:24px;height:24px;fill:rgba(0,0,0,0.54)" viewBox="0 0 24 24"><path fill-rule="evenodd" d="M19 9h-4V3H9v6H5l7 7 7-7zM5 18v2h14v-2H5z"/></svg>
<svg class="abs" style="left:816px;top:327px;width:24px;height:24px;fill:rgba(0,0,0,0.54)" viewBox="0 0 24 24"><path fill-rule="evenodd" d="M13,9V3.5L18.5,9M6,2C4.89,2 4,2.89 4,4V20A2,2 0 0,0 6,22H18A2,2 0 0,0 20,20V8L14,2H6Z M8.93,12.22H16V19.29L13.88,17.17L11.05,20H8.22V17.17L11.05,14.35Z"/></svg>
<div class="abs" style="left:1046px;top:321px;width:124px;height:36px;background:#005c50;border-radius:5px"></div>
<div class="t" style="left:1062.00px;top:331.05px;font-size:15px;color:#fff;letter-spacing:-0.172px;-webkit-text-stroke:0.45px #fff;">Update image</div>
<div class="abs" style="left:744.5px;top:371px;width:430px;height:426px;border:4px solid #f7cf8b;border-radius:11px;background:#fff"></div>
<svg class="abs" style="left:745px;top:371px;width:429px;height:425px" viewBox="745 371 429 425">
<defs>
<linearGradient id="gm" gradientUnits="userSpaceOnUse" x1="848" y1="620" x2="1125" y2="474"><stop offset="0" stop-color="#a6a6a6"/><stop offset="1" stop-color="#f2f2f2"/></linearGradient>
<linearGradient id="gl" gradientUnits="userSpaceOnUse" x1="769" y1="684" x2="920" y2="600"><stop offset="0" stop-color="#a6a6a6"/><stop offset="1" stop-color="#f2f2f2"/></linearGradient>
<linearGradient id="gt" gradientUnits="userSpaceOnUse" x1="1098" y1="682" x2="1160" y2="591"><stop offset="0" stop-color="#a6a6a6"/><stop offset="1" stop-color="#f2f2f2"/></linearGradient>
<linearGradient id="gp" gradientUnits="userSpaceOnUse" x1="1079" y1="692" x2="1112" y2="633"><stop offset="0" stop-color="#a6a6a6"/><stop offset="1" stop-color="#f2f2f2"/></linearGradient>
</defs>
<!-- monitor -->
<rect x="838.4" y="464" width="296" height="166.3" rx="3" fill="#000"/>
<polygon points="1031,473.7 1040.5,464.3 1131,464.3 1134.4,467 1134.4,630 1124.7,630 1124.7,473.7" fill="#555"/>
<polygon points="1032.5,630.3 1037.5,620 1124.7,620 1124.7,630.3" fill="#9a9a9a"/>
<rect x="847.9" y="473.7" width="276.8" height="146" rx="2.5" fill="url(#gm)" stroke="#222" stroke-width="0.6"/>
<circle cx="986" cy="469.5" r="2.2" fill="none" stroke="#888" stroke-width="0.8"/>
<!-- stand -->
<rect x="926" y="677.6" width="137" height="9.2" rx="2.5" fill="#555"/>
<rect x="963" y="630.3" width="46" height="19" fill="#666"/>
<rect x="963" y="649.2" width="46" height="28.4" fill="#cbcbcb" stroke="#8a8a8a" stroke-width="0.6"/>
<rect x="963" y="677.6" width="46" height="9.2" fill="#9c9c9c"/>
<!-- laptop -->
<rect x="755.3" y="690" width="178.7" height="10.5" rx="2.5" fill="#333"/>
<rect x="755.3" y="690" width="178.7" height="2" fill="#777"/>
<rect x="762.4" y="587.4" width="163.6" height="102.6" rx="3" fill="#000"/>
<polygon points="869.5,599.5 874.7,587.8 923,587.8 926,590 926,690 919.5,690 919.5,599.5" fill="#555"/>
<polygon points="874,690 878,684.2 926,684.2 926,690" fill="#9a9a9a"/>
<rect x="769.5" y="599.5" width="150" height="84.7" rx="2" fill="url(#gl)" stroke="#222" stroke-width="0.6"/>
<circle cx="844" cy="594" r="2" fill="none" stroke="#888" stroke-width="0.8"/>
<!-- tablet -->
<rect x="1095.3" y="577.6" width="67.6" height="109.2" rx="5" fill="#000"/>
<polygon points="1095.5,590.8 1095.5,582 1099,577.8 1122,577.8 1115.5,590.8" fill="#555"/>
<rect x="1097.9" y="590.8" width="62.4" height="90.8" rx="3" fill="url(#gt)" stroke="#333" stroke-width="0.6"/>
<circle cx="1129.5" cy="584.2" r="2.6" fill="none" stroke="#999" stroke-width="1"/>
<circle cx="1132" cy="684" r="1.4" fill="none" stroke="#999" stroke-width="0.7"/>
<!-- phone -->
<rect x="1078.2" y="629.7" width="35.5" height="70.8" rx="4" fill="#000"/>
<polygon points="1104,629.9 1110,629.9 1113.5,633 1113.5,700 1112,700 1112,633.4" fill="#666"/>
<rect x="1079.5" y="633.4" width="32.5" height="58.7" rx="2" fill="url(#gp)" stroke="#333" stroke-width="0.5"/>
<circle cx="1096" cy="696.3" r="2" fill="none" stroke="#888" stroke-width="0.8"/>
</svg>

<div class="t" style="left:747.70px;top:804.60px;font-size:14px;color:rgba(0,0,0,0.38);letter-spacing:0.547px;">797x474</div>
<div class="abs" style="left:813px;top:802px;width:1px;height:20px;background:rgba(0,0,0,0.12)"></div>
<div class="t" style="left:822.00px;top:804.60px;font-size:14px;color:rgba(0,0,0,0.38);letter-spacing:0.198px;">33.8 KB</div>
</body></html>
